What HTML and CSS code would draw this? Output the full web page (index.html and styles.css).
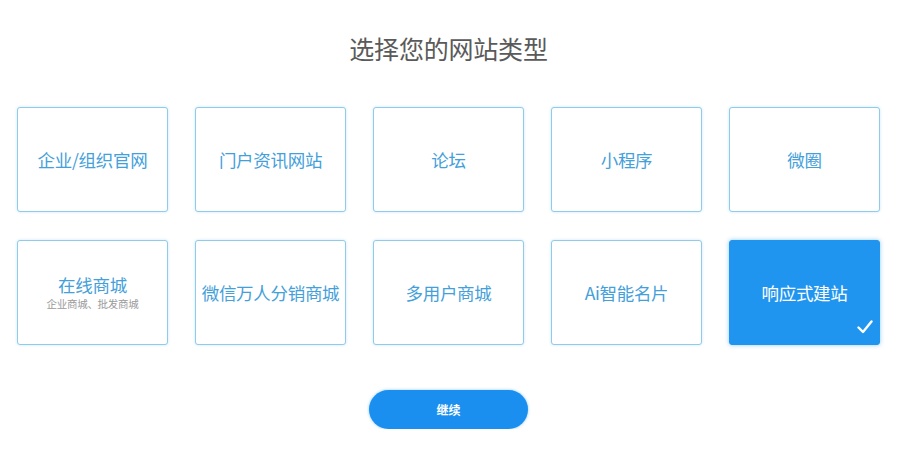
FILE: index.html
```html
<!DOCTYPE html>
<html lang="zh">
<head>
<meta charset="utf-8">
<link rel="stylesheet" href="styles.css">
</head>
<body>
<div class="page">
  <h1 class="title">选择您的网站类型</h1>
  <div class="grid">
    <div class="card"><span class="name">企业/组织官网</span></div>
    <div class="card"><span class="name">门户资讯网站</span></div>
    <div class="card"><span class="name">论坛</span></div>
    <div class="card"><span class="name">小程序</span></div>
    <div class="card"><span class="name">微圈</span></div>
    <div class="card"><span class="name">在线商城</span><span class="sub">企业商城、批发商城</span></div>
    <div class="card"><span class="name">微信万人分销商城</span></div>
    <div class="card"><span class="name">多用户商城</span></div>
    <div class="card"><span class="name">Ai智能名片</span></div>
    <div class="card selected"><span class="name">响应式建站</span>
      <svg class="check" width="16" height="14" viewBox="0 0 16 14"><path d="M1.5 7.5 L6 12 L14.5 1.5" fill="none" stroke="#fff" stroke-width="2.4" stroke-linecap="round" stroke-linejoin="round"/></svg>
    </div>
  </div>
  <div class="actions"><button class="btn">继续</button></div>
</div>
</body>
</html>
```
FILE: styles.css
```css
html, body {
  margin: 0;
  padding: 0;
  background: #ffffff;
}
body {
  font-family: "Noto Sans CJK SC", "Noto Sans", sans-serif;
}
.page {
  width: 897px;
  display: flex;
  flex-direction: column;
  align-items: center;
}
.title {
  margin: 33px 0 0 0;
  font-size: 25px;
  line-height: 30px;
  font-weight: 400;
  color: #5a5a5a;
  letter-spacing: -0.2px;
}
.grid {
  margin-top: 44px;
  display: grid;
  grid-template-columns: repeat(5, 151px);
  grid-auto-rows: 105px;
  column-gap: 27px;
  row-gap: 28px;
}
.card {
  position: relative;
  box-sizing: border-box;
  border: 1px solid #8fcbea;
  border-radius: 3px;
  box-shadow: 0 0 3px rgba(140, 200, 235, 0.45);
  display: flex;
  flex-direction: column;
  align-items: center;
  justify-content: center;
  background: #fff;
}
.name {
  font-size: 17.5px;
  line-height: 22px;
  color: #44a0da;
  letter-spacing: -0.3px;
  white-space: nowrap;
}
.sub {
  margin-top: 1px;
  font-size: 10.5px;
  line-height: 14px;
  color: #9a9a9a;
  letter-spacing: -0.3px;
}
.card.selected {
  background: #1f95f0;
  border-color: #1f95f0;
  box-shadow: 0 0 4px rgba(31, 149, 240, 0.5);
}
.card.selected .name {
  color: #ffffff;
}
.check {
  position: absolute;
  right: 6px;
  bottom: 10px;
}
.actions {
  margin-top: 45px;
}
.btn {
  width: 159px;
  height: 39px;
  border: none;
  border-radius: 20px;
  background: #1a8ff0;
  color: #fff;
  font-family: "Noto Sans CJK SC", sans-serif;
  font-size: 12px;
  font-weight: 700;
  box-shadow: 0 0 3px rgba(26, 143, 240, 0.5);
}
```
